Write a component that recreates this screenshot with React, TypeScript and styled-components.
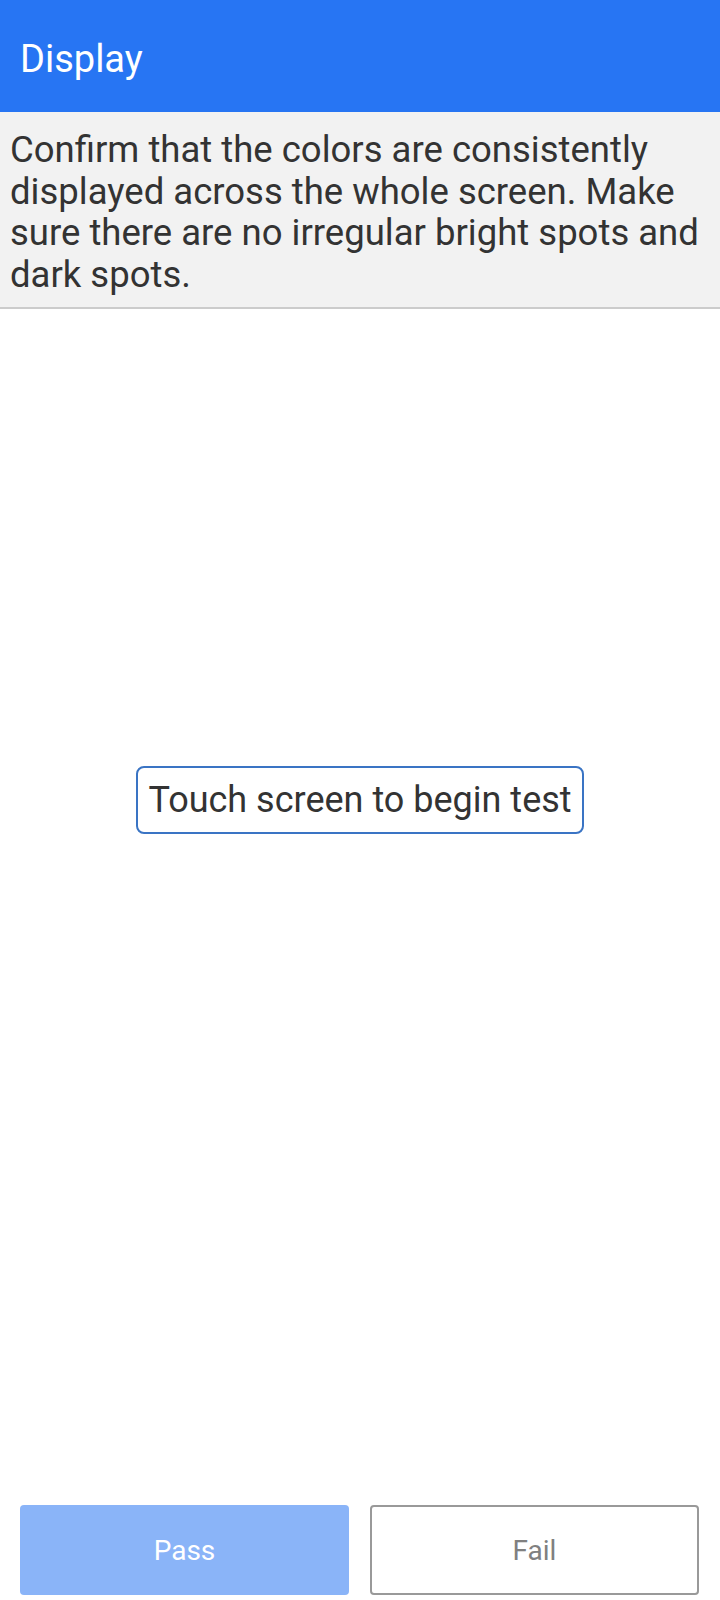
import styled, { createGlobalStyle } from 'styled-components';

const GlobalStyle = createGlobalStyle`
  html, body {
    margin: 0;
    padding: 0;
    background: #ffffff;
  }

  body {
    font-family: Roboto, "Noto Sans", sans-serif;
  }
`;

const Screen = styled.div`
  display: flex;
  flex-direction: column;
  width: 720px;
  height: 1600px;
  background: #ffffff;
`;

const Header = styled.header`
  display: flex;
  align-items: center;
  height: 112px;
  padding: 6px 20px 0;
  box-sizing: border-box;
  background: #2775f3;
`;

const Title = styled.h1`
  margin: 0;
  font-size: 38px;
  font-weight: 400;
  color: #ffffff;
`;

const Instructions = styled.p`
  margin: 0;
  padding: 17px 10px 12px 10px;
  background: #f2f2f2;
  border-bottom: 2px solid #cccccc;
  font-size: 36.5px;
  line-height: 41.5px;
  color: #333333;
`;

const TestArea = styled.main`
  flex: 1;
  display: flex;
  flex-direction: column;
  align-items: center;
  padding-top: 457px;
`;

const StartPrompt = styled.div`
  display: flex;
  align-items: center;
  height: 68px;
  padding: 0 10px;
  box-sizing: border-box;
  border: 2px solid #3a74c4;
  border-radius: 8px;
  font-size: 36px;
  color: #333333;
`;

const ButtonRow = styled.footer`
  display: grid;
  grid-template-columns: 1fr 1fr;
  gap: 21px;
  padding: 0 21px 5px 20px;
`;

const ResultButton = styled.button<{ $variant: 'pass' | 'fail' }>`
  height: 90px;
  border-radius: 4px;
  font-family: Roboto, "Noto Sans", sans-serif;
  font-size: 28px;
  cursor: pointer;
  background: ${({ $variant }) => ($variant === 'pass' ? '#8ab4f8' : '#ffffff')};
  border: ${({ $variant }) => ($variant === 'pass' ? 'none' : '2px solid #999999')};
  color: ${({ $variant }) => ($variant === 'pass' ? '#ffffff' : '#808080')};
`;

export default function App() {
  return (
    <>
      <GlobalStyle />
      <Screen>
        <Header>
          <Title>Display</Title>
        </Header>
        <Instructions>
          Confirm that the colors are consistently displayed across the whole screen. Make sure
          there are no irregular bright spots and dark spots.
        </Instructions>
        <TestArea>
          <StartPrompt>Touch screen to begin test</StartPrompt>
        </TestArea>
        <ButtonRow>
          <ResultButton $variant="pass">Pass</ResultButton>
          <ResultButton $variant="fail">Fail</ResultButton>
        </ButtonRow>
      </Screen>
    </>
  );
}
